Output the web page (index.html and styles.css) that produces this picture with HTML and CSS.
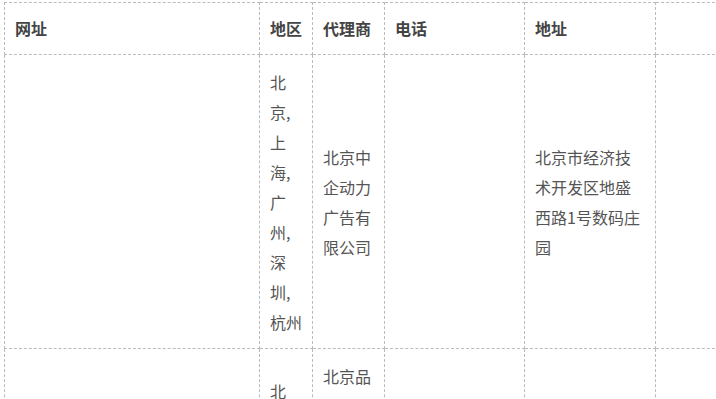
FILE: index.html
```html
<!DOCTYPE html>
<html lang="zh-CN">
	<head>
		<meta charset="UTF-8" />
		<meta name="viewport" content="width=device-width, initial-scale=1.0" />
		<title>代理商列表</title>
		<link rel="stylesheet" href="styles.css">
	</head>
	<body>
		<div class="wrap">
			<table class="agents">
				<thead>
					<tr>
						<th class="c-site">网址</th>
						<th class="c-area">地区</th>
						<th class="c-agent">代理商</th>
						<th class="c-tel">电话</th>
						<th class="c-addr">地址</th>
						<th class="c-more"></th>
					</tr>
				</thead>
				<tbody>
					<tr>
						<td></td>
						<td>北京,上海,广州,深圳,杭州</td>
						<td>北京中企动力广告有限公司</td>
						<td></td>
						<td>北京市经济技术开发区地盛西路1号数码庄园</td>
						<td></td>
					</tr>
					<tr>
						<td></td>
						<td>北京,上海,广州</td>
						<td>北京品众互动网络营销技术有限公司</td>
						<td></td>
						<td>北京市海淀区中关村大街27号中关村大厦</td>
						<td></td>
					</tr>
				</tbody>
			</table>
		</div>
	</body>
</html>
```

FILE: styles.css
```css
* {
	margin: 0;
	padding: 0;
	box-sizing: border-box;
}

html,
body {
	overflow: hidden;
}

body {
	font-family: "Noto Sans CJK SC", "Microsoft YaHei", sans-serif;
	font-size: 16px;
	color: #555;
	background: #fff;
}

.wrap {
	padding: 2px 0 0 4px;
}

.agents {
	border-collapse: collapse;
	table-layout: fixed;
	width: 771px;
}

.agents th,
.agents td {
	border: 1px dashed #bbb;
	padding: 12px 10px 11px;
	line-height: 30px;
	text-align: left;
	vertical-align: middle;
}

.agents th {
	padding: 10px 10px 11px;
	font-weight: bold;
	color: #444;
}

/* 各欄寬度 */
.c-site {
	width: 255px;
}
.c-area {
	width: 53px;
}
.c-agent {
	width: 72px;
}
.c-tel {
	width: 140px;
}
.c-addr {
	width: 131px;
}
.c-more {
	width: 120px;
}
```
